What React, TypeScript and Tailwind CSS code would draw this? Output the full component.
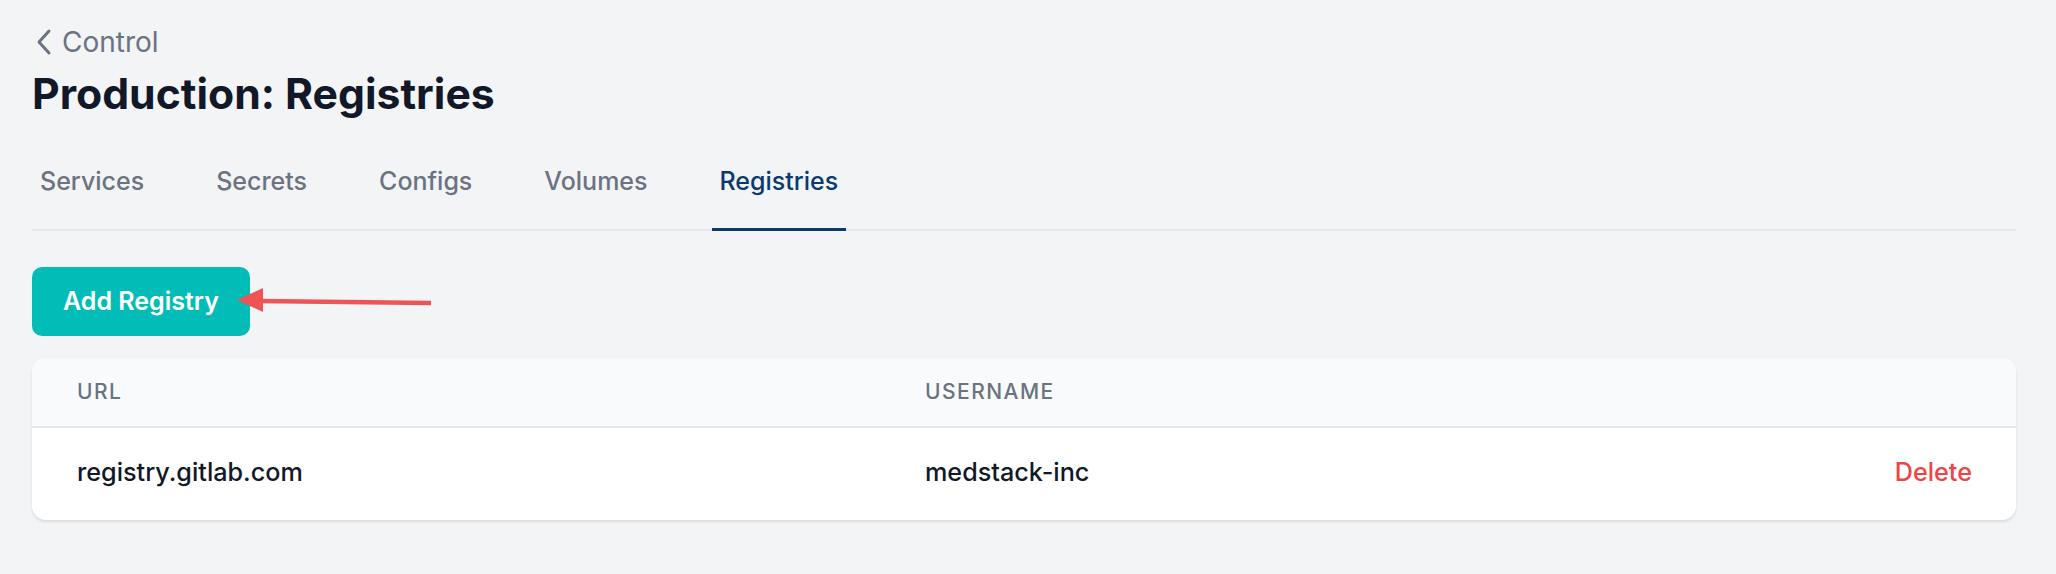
const tabs = ["Services", "Secrets", "Configs", "Volumes", "Registries"];

const registries = [{ url: "registry.gitlab.com", username: "medstack-inc" }];

export default function App() {
  return (
    <div className="min-h-[574px] w-[2056px] bg-[#f3f4f6] pl-[32px] pr-[40px] pt-[24px] font-['Inter',sans-serif]">
      {/* breadcrumb + title */}
      <a className="flex items-center gap-[10px] pl-[4px] text-[28px] leading-[36px] text-[#6b7280]">
        <svg width="16" height="28" viewBox="0 0 16 28" fill="none">
          <polyline
            points="13,3 3,14 13,25"
            stroke="#6b7280"
            strokeWidth="3"
            strokeLinecap="round"
            strokeLinejoin="round"
          />
        </svg>
        Control
      </a>
      <h1 className="mt-[8px] text-[42.7px] font-bold leading-[52px] text-[#111827]">
        Production: Registries
      </h1>

      {/* tabs */}
      <nav className="mt-[43px] flex gap-[56px] border-b-2 border-[#e5e7eb]">
        {tabs.map((t) => {
          const active = t === "Registries";
          return (
            <div
              key={t}
              className={
                active
                  ? "-mb-[2px] border-b-[3px] border-[#0b3a6e] px-[8px] pb-[29px] text-[25px] font-medium leading-[36px] text-[#0b3a6e]"
                  : "-mb-[2px] border-b-[3px] border-transparent px-[8px] pb-[29px] text-[25px] font-medium leading-[36px] text-[#6b7280]"
              }
            >
              {t}
            </div>
          );
        })}
      </nav>

      {/* action */}
      <div className="relative mt-[36px] flex">
        <button className="h-[69px] rounded-[10px] bg-[#02bdb7] px-[31px] text-[25px] font-semibold text-white">
          Add Registry
        </button>
        <svg
          className="absolute left-[205px] top-[20px]"
          width="200"
          height="30"
          viewBox="0 0 200 30"
        >
          <line x1="22" y1="14" x2="194" y2="16" stroke="#ef5454" strokeWidth="4.5" />
          <polygon points="0,13 26,1 26,25" fill="#ef5454" />
        </svg>
      </div>

      {/* table */}
      <div className="mt-[22px] overflow-hidden rounded-[14px] bg-white shadow-[0_2px_3px_rgba(0,0,0,0.1)]">
        <div className="grid h-[70px] grid-cols-[848px_1fr_auto] items-center border-b-2 border-[#e5e7eb] bg-[#f9fafb] pl-[45px] pr-[44px] text-[21px] font-medium uppercase tracking-[0.07em] text-[#6b7280]">
          <div>URL</div>
          <div>Username</div>
          <div />
        </div>
        {registries.map((r) => (
          <div
            key={r.url}
            className="grid h-[92px] grid-cols-[848px_1fr_auto] items-center pb-[2px] pl-[45px] pr-[44px] text-[25.2px] font-medium text-[#111827]"
          >
            <div>{r.url}</div>
            <div>{r.username}</div>
            <div className="text-[#ef4444]">Delete</div>
          </div>
        ))}
      </div>
    </div>
  );
}
